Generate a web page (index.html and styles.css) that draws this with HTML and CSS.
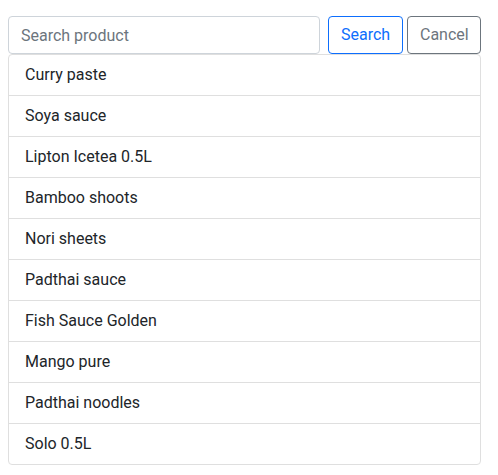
FILE: index.html
```html
<!DOCTYPE html>
<html>
<head>
<meta charset="utf-8">
<link rel="stylesheet" href="styles.css">
</head>
<body>
<div class="wrap">
  <div class="search-row">
    <input class="search-input" type="text" placeholder="Search product">
    <button class="btn btn-primary">Search</button>
    <button class="btn btn-secondary">Cancel</button>
  </div>
  <ul class="list">
    <li class="item">Curry paste</li>
    <li class="item">Soya sauce</li>
    <li class="item">Lipton Icetea 0.5L</li>
    <li class="item">Bamboo shoots</li>
    <li class="item">Nori sheets</li>
    <li class="item">Padthai sauce</li>
    <li class="item">Fish Sauce Golden</li>
    <li class="item">Mango pure</li>
    <li class="item">Padthai noodles</li>
    <li class="item">Solo 0.5L</li>
  </ul>
</div>
</body>
</html>
```
FILE: styles.css
```css
html, body {
  margin: 0;
  padding: 0;
  background: #fff;
}
body {
  font-family: Roboto, "Liberation Sans", sans-serif;
  font-size: 16px;
  color: #212529;
  padding: 16px 8px 0 8px;
}
.wrap {
  width: 473px;
}
.search-row {
  display: flex;
  align-items: center;
  height: 38px;
}
.search-input {
  box-sizing: border-box;
  width: 312px;
  height: 38px;
  border: 1px solid #ced4da;
  border-radius: 4px;
  padding: 6px 12px;
  font-family: inherit;
  font-size: 16px;
  color: #212529;
  outline: none;
  margin-right: 8px;
}
.search-input::placeholder {
  color: #6c757d;
}
.btn {
  box-sizing: border-box;
  height: 38px;
  background: #fff;
  border: 1px solid;
  border-radius: 4px;
  padding: 6px 12px;
  font-family: inherit;
  font-size: 16px;
  line-height: 24px;
}
.btn-primary {
  color: #0d6efd;
  border-color: #0d6efd;
  width: 75px;
  margin-right: 4px;
}
.btn-secondary {
  color: #6c757d;
  border-color: #6c757d;
  width: 74px;
}
.list {
  list-style: none;
  margin: 0;
  padding: 0;
  border: 1px solid #dfdfdf;
  border-radius: 4px;
}
.item {
  padding: 8px 16px;
  line-height: 24px;
  border-top: 1px solid #dfdfdf;
}
.item:first-child {
  border-top: none;
}
```
